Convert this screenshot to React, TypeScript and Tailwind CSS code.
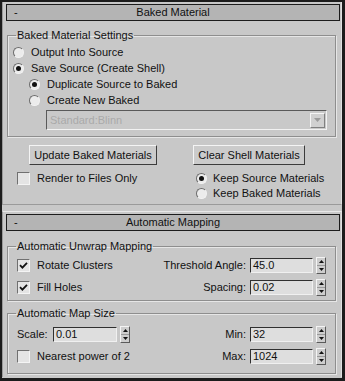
import React from 'react';

function Radio({ checked }: { checked?: boolean }) {
  return (
    <span className="flex h-[11px] w-[11px] shrink-0 items-center justify-center rounded-full border border-t-[#6c6c6c] border-l-[#6c6c6c] border-r-[#f2f2f2] border-b-[#f2f2f2] bg-[#ececec]">
      {checked && <span className="h-[5px] w-[5px] rounded-full bg-[#111]" />}
    </span>
  );
}

function Check({ checked }: { checked?: boolean }) {
  return (
    <span className="flex h-[13px] w-[13px] shrink-0 items-center justify-center border border-t-[#707070] border-l-[#707070] border-r-[#f4f4f4] border-b-[#f4f4f4] bg-[#e4e4e4]">
      {checked && (
        <svg width="9" height="9" viewBox="0 0 9 9">
          <path d="M1 4.2 L3.4 6.6 L8 1.8" fill="none" stroke="#111" strokeWidth="1.8" />
        </svg>
      )}
    </span>
  );
}

function Spin() {
  return (
    <span className="ml-[3px] flex h-[17px] w-[10px] shrink-0 flex-col border border-t-[#f4f4f4] border-l-[#f4f4f4] border-r-[#5a5a5a] border-b-[#5a5a5a] bg-[#cdcdcd]">
      <span className="flex flex-1 items-center justify-center border-b border-[#9a9a9a]">
        <svg width="5" height="3" viewBox="0 0 5 3"><path d="M2.5 0 L5 3 L0 3 Z" fill="#111" /></svg>
      </span>
      <span className="flex flex-1 items-center justify-center">
        <svg width="5" height="3" viewBox="0 0 5 3"><path d="M0 0 L5 0 L2.5 3 Z" fill="#111" /></svg>
      </span>
    </span>
  );
}

function Field({ value, w }: { value: string; w: string }) {
  return (
    <span className={`flex h-[15px] ${w} items-center border border-t-[#303030] border-l-[#303030] border-r-[#f0f0f0] border-b-[#f0f0f0] bg-[#dedede] pl-[2px] leading-none`}>
      {value}
    </span>
  );
}

function Header({ title }: { title: string }) {
  return (
    <div className="ml-[3px] mr-[1px] grid h-[17px] grid-cols-[1fr_auto_1fr] items-center border border-[#1c1c1c] bg-[#b4b4b4]">
      <span className="pl-[7px]">-</span>
      <span>{title}</span>
      <span />
    </div>
  );
}

function Button({ label, w }: { label: string; w: string }) {
  return (
    <div className={`flex h-[20px] ${w} items-center justify-center border border-t-[#f4f4f4] border-l-[#f4f4f4] border-r-[#3c3c3c] border-b-[#3c3c3c] bg-[#cbcbcb]`}>
      {label}
    </div>
  );
}

const group =
  'ml-[4px] mr-[5px] border border-[#8e8e8e] px-0 shadow-[inset_1px_1px_0_#e6e6e6,1px_1px_0_#e6e6e6]';

export default function App() {
  return (
    <div className="h-[381px] w-[345px] border-t-2 border-l-2 border-r-[3px] border-b-[3px] border-[#1c1c1c] bg-[#c8c8c8] font-['Liberation_Sans',Arial,sans-serif] text-[11px] leading-[13px] text-[#111]">
      <div className="h-[203px] border-l border-r border-l-[#9a9a9a] border-r-[#e0e0e0] border-b border-b-[#9a9a9a] pt-[2px]">
        <Header title="Baked Material" />
        <fieldset className={`${group} mt-[8px] pb-[6px]`}>
          <legend className="ml-[8px] px-[1px]">Baked Material Settings</legend>
          <div className="mt-[2px] flex h-[16px] items-center gap-[7px] pl-[5px]">
            <Radio />
            <span>Output Into Source</span>
          </div>
          <div className="flex h-[16px] items-center gap-[7px] pl-[5px]">
            <Radio checked />
            <span>Save Source (Create Shell)</span>
          </div>
          <div className="flex h-[16px] items-center gap-[7px] pl-[21px]">
            <Radio checked />
            <span>Duplicate Source to Baked</span>
          </div>
          <div className="flex h-[16px] items-center gap-[7px] pl-[21px]">
            <Radio />
            <span>Create New Baked</span>
          </div>
          <div className="ml-[38px] mr-[8px] mt-[2px] flex h-[20px] items-center border border-t-[#5a5a5a] border-l-[#5a5a5a] border-r-[#f2f2f2] border-b-[#f2f2f2] bg-[#c9c9c9]">
            <span className="flex-1 pl-[3px] text-[#a9a9a9]">Standard:Blinn</span>
            <span className="mr-[1px] flex h-[15px] w-[15px] items-center justify-center border border-t-[#f4f4f4] border-l-[#f4f4f4] border-r-[#808080] border-b-[#808080] bg-[#d0d0d0]">
              <svg width="7" height="4" viewBox="0 0 7 4"><path d="M0 0 L7 0 L3.5 4 Z" fill="#9a9a9a" /></svg>
            </span>
          </div>
        </fieldset>
        <div className="mt-[8px] flex pl-[26px]">
          <Button label="Update Baked Materials" w="w-[128px]" />
          <div className="w-[36px]" />
          <Button label="Clear Shell Materials" w="w-[112px]" />
        </div>
        <div className="mt-[6px] flex pl-[14px]">
          <div className="flex h-[15px] w-[179px] items-center gap-[7px]">
            <Check />
            <span>Render to Files Only</span>
          </div>
          <div className="flex flex-col">
            <div className="flex h-[15px] items-center gap-[6px]">
              <Radio checked />
              <span>Keep Source Materials</span>
            </div>
            <div className="flex h-[15px] items-center gap-[6px]">
              <Radio />
              <span>Keep Baked Materials</span>
            </div>
          </div>
        </div>
      </div>
      <div className="mt-[6px] h-[166px] border-t border-l border-r border-t-[#e8e8e8] border-l-[#9a9a9a] border-r-[#e0e0e0] pt-[2px]">
        <Header title="Automatic Mapping" />
        <fieldset className={`${group} mt-[9px] pb-[2px]`}>
          <legend className="ml-[8px] px-[1px]">Automatic Unwrap Mapping</legend>
          <div className="mt-[1px] flex h-[22px] items-center justify-between pl-[9px] pr-[9px]">
            <div className="flex items-center gap-[7px]">
              <Check checked />
              <span>Rotate Clusters</span>
            </div>
            <div className="flex items-center">
              <span className="mr-[4px]">Threshold Angle:</span>
              <Field value="45.0" w="w-[63px]" />
              <Spin />
            </div>
          </div>
          <div className="flex h-[22px] items-center justify-between pl-[9px] pr-[9px]">
            <div className="flex items-center gap-[7px]">
              <Check checked />
              <span>Fill Holes</span>
            </div>
            <div className="flex items-center">
              <span className="mr-[4px]">Spacing:</span>
              <Field value="0.02" w="w-[63px]" />
              <Spin />
            </div>
          </div>
        </fieldset>
        <fieldset className={`${group} mt-[6px] pb-[6px]`}>
          <legend className="ml-[8px] px-[1px]">Automatic Map Size</legend>
          <div className="mt-[3px] flex h-[22px] items-center justify-between pl-[9px] pr-[9px]">
            <div className="flex items-center">
              <span className="w-[36px]">Scale:</span>
              <Field value="0.01" w="w-[64px]" />
              <Spin />
            </div>
            <div className="flex items-center">
              <span className="mr-[4px]">Min:</span>
              <Field value="32" w="w-[63px]" />
              <Spin />
            </div>
          </div>
          <div className="flex h-[22px] items-center justify-between pl-[9px] pr-[9px]">
            <div className="flex items-center gap-[7px]">
              <Check />
              <span>Nearest power of 2</span>
            </div>
            <div className="flex items-center">
              <span className="mr-[4px]">Max:</span>
              <Field value="1024" w="w-[63px]" />
              <Spin />
            </div>
          </div>
        </fieldset>
      </div>
    </div>
  );
}
